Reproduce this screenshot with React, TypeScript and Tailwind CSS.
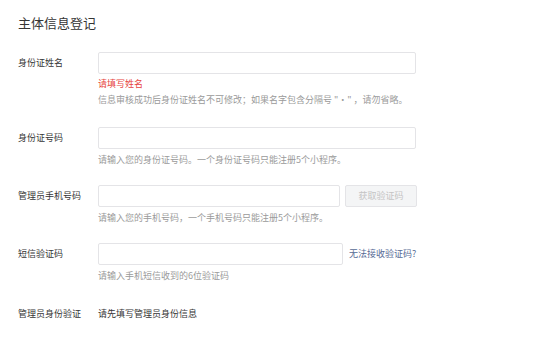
import React from "react";

const font = { fontFamily: '"Noto Sans CJK SC", "Noto Sans", sans-serif' };

type RowProps = {
  label: string;
  children: React.ReactNode;
  className?: string;
};

const Row = ({ label, children, className }: RowProps) => (
  <div className={"flex " + (className || "")}>
    <div className="w-[80px] shrink-0 h-[22px] flex items-center text-[9px] text-[#353535]">
      {label}
    </div>
    <div className="flex flex-col">{children}</div>
  </div>
);

const Input = ({ width }: { width: string }) => (
  <div className={"h-[22px] border border-[#e4e4e7] rounded-[2px] bg-white " + width} />
);

const Tip = ({ text, className }: { text: string; className?: string }) => (
  <div className={"text-[9px] leading-[12px] text-[#9a9a9a] whitespace-nowrap " + (className || "")}>
    {text}
  </div>
);

export default function App() {
  return (
    <div className="w-[554px] h-[354px] bg-white pl-[18px] pt-[14px]" style={font}>
      <h2 className="text-[13px] leading-[18px] text-[#353535]">主体信息登记</h2>

      <Row label="身份证姓名" className="mt-[20px]">
        <Input width="w-[318px]" />
        <div className="mt-[4px] text-[9px] leading-[12px] text-[#e64340]">请填写姓名</div>
        <Tip
          className="mt-[4px]"
          text={'信息审核成功后身份证姓名不可修改；如果名字包含分隔号 "·" ，请勿省略。'}
        />
      </Row>

      <Row label="身份证号码" className="mt-[21px]">
        <Input width="w-[318px]" />
        <Tip className="mt-[5px]" text="请输入您的身份证号码。一个身份证号码只能注册5个小程序。" />
      </Row>

      <Row label="管理员手机号码" className="mt-[19px]">
        <div className="flex gap-[5px]">
          <Input width="w-[242px]" />
          <button className="w-[72px] h-[22px] border border-[#e4e4e7] rounded-[2px] bg-[#f4f5f6] text-[9px] text-[#c4c4c4]">
            获取验证码
          </button>
        </div>
        <Tip className="mt-[5px]" text="请输入您的手机号码，一个手机号码只能注册5个小程序。" />
      </Row>

      <Row label="短信验证码" className="mt-[19px]">
        <div className="flex items-center gap-[6px]">
          <Input width="w-[245px]" />
          <span className="text-[9px] text-[#576b95]">无法接收验证码?</span>
        </div>
        <Tip className="mt-[5px]" text="请输入手机短信收到的6位验证码" />
      </Row>

      <Row label="管理员身份验证" className="mt-[21px]">
        <div className="h-[22px] flex items-center text-[9px] text-[#353535]">请先填写管理员身份信息</div>
      </Row>
    </div>
  );
}
